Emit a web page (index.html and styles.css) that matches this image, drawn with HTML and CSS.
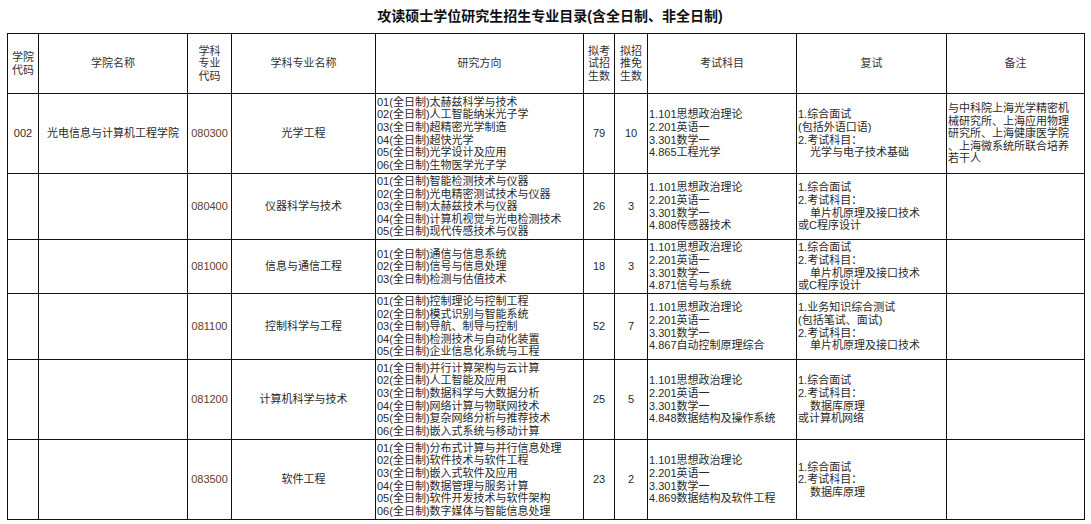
FILE: index.html
```html
<!DOCTYPE html>
<html lang="zh-CN">
<head>
<meta charset="utf-8">
<title>攻读硕士学位研究生招生专业目录</title>
<link rel="stylesheet" href="styles.css">
</head>
<body>
<h1 class="title">攻读硕士学位研究生招生专业目录(含全日制、非全日制)</h1>
<table class="catalog">
  <colgroup>
    <col class="c1"><col class="c2"><col class="c3"><col class="c4"><col class="c5">
    <col class="c6"><col class="c7"><col class="c8"><col class="c9"><col class="c10">
  </colgroup>
  <thead>
    <tr class="h-head">
      <th>学院<br>代码</th>
      <th>学院名称</th>
      <th>学科<br>专业<br>代码</th>
      <th>学科专业名称</th>
      <th>研究方向</th>
      <th>拟考<br>试招<br>生数</th>
      <th>拟招<br>推免<br>生数</th>
      <th>考试科目</th>
      <th>复试</th>
      <th>备注</th>
    </tr>
  </thead>
  <tbody>
    <tr class="h80">
      <td class="center">002</td>
      <td class="center">光电信息与计算机工程学院</td>
      <td class="center code">080300</td>
      <td class="center">光学工程</td>
      <td class="left">01(全日制)太赫兹科学与技术<br>02(全日制)人工智能纳米光子学<br>03(全日制)超精密光学制造<br>04(全日制)超快光学<br>05(全日制)光学设计及应用<br>06(全日制)生物医学光子学</td>
      <td class="center">79</td>
      <td class="center">10</td>
      <td class="left">1.101思想政治理论<br>2.201英语一<br>3.301数学一<br>4.865工程光学</td>
      <td class="left">1.综合面试<br>(包括外语口语)<br>2.考试科目：<br><span class="ind">光学与电子技术基础</span></td>
      <td class="left note">与中科院上海光学精密机<br>械研究所、上海应用物理<br>研究所、上海健康医学院<br>、上海微系统所联合培养<br>若干人</td>
    </tr>
    <tr class="h66">
      <td></td>
      <td></td>
      <td class="center code">080400</td>
      <td class="center">仪器科学与技术</td>
      <td class="left">01(全日制)智能检测技术与仪器<br>02(全日制)光电精密测试技术与仪器<br>03(全日制)太赫兹技术与仪器<br>04(全日制)计算机视觉与光电检测技术<br>05(全日制)现代传感技术与仪器</td>
      <td class="center">26</td>
      <td class="center">3</td>
      <td class="left">1.101思想政治理论<br>2.201英语一<br>3.301数学一<br>4.808传感器技术</td>
      <td class="left">1.综合面试<br>2.考试科目：<br><span class="ind">单片机原理及接口技术</span><br>或C程序设计</td>
      <td></td>
    </tr>
    <tr class="h54">
      <td></td>
      <td></td>
      <td class="center code">081000</td>
      <td class="center">信息与通信工程</td>
      <td class="left">01(全日制)通信与信息系统<br>02(全日制)信号与信息处理<br>03(全日制)检测与估值技术</td>
      <td class="center">18</td>
      <td class="center">3</td>
      <td class="left">1.101思想政治理论<br>2.201英语一<br>3.301数学一<br>4.871信号与系统</td>
      <td class="left">1.综合面试<br>2.考试科目：<br><span class="ind">单片机原理及接口技术</span><br>或C程序设计</td>
      <td></td>
    </tr>
    <tr class="h66">
      <td></td>
      <td></td>
      <td class="center code">081100</td>
      <td class="center">控制科学与工程</td>
      <td class="left">01(全日制)控制理论与控制工程<br>02(全日制)模式识别与智能系统<br>03(全日制)导航、制导与控制<br>04(全日制)检测技术与自动化装置<br>05(全日制)企业信息化系统与工程</td>
      <td class="center">52</td>
      <td class="center">7</td>
      <td class="left">1.101思想政治理论<br>2.201英语一<br>3.301数学一<br>4.867自动控制原理综合</td>
      <td class="left">1.业务知识综合测试<br>(包括笔试、面试)<br>2.考试科目：<br><span class="ind">单片机原理及接口技术</span></td>
      <td></td>
    </tr>
    <tr class="h80">
      <td></td>
      <td></td>
      <td class="center code">081200</td>
      <td class="center">计算机科学与技术</td>
      <td class="left">01(全日制)并行计算架构与云计算<br>02(全日制)人工智能及应用<br>03(全日制)数据科学与大数据分析<br>04(全日制)网络计算与物联网技术<br>05(全日制)复杂网络分析与推荐技术<br>06(全日制)嵌入式系统与移动计算</td>
      <td class="center">25</td>
      <td class="center">5</td>
      <td class="left">1.101思想政治理论<br>2.201英语一<br>3.301数学一<br>4.848数据结构及操作系统</td>
      <td class="left">1.综合面试<br>2.考试科目：<br><span class="ind">数据库原理</span><br>或计算机网络</td>
      <td></td>
    </tr>
    <tr class="h80">
      <td></td>
      <td></td>
      <td class="center code">083500</td>
      <td class="center">软件工程</td>
      <td class="left">01(全日制)分布式计算与并行信息处理<br>02(全日制)软件技术与软件工程<br>03(全日制)嵌入式软件及应用<br>04(全日制)数据管理与服务计算<br>05(全日制)软件开发技术与软件架构<br>06(全日制)数字媒体与智能信息处理</td>
      <td class="center">23</td>
      <td class="center">2</td>
      <td class="left">1.101思想政治理论<br>2.201英语一<br>3.301数学一<br>4.869数据结构及软件工程</td>
      <td class="left">1.综合面试<br>2.考试科目：<br><span class="ind">数据库原理</span></td>
      <td></td>
    </tr>
  </tbody>
</table>
</body>
</html>
```
FILE: styles.css
```css
html, body {
  margin: 0;
  padding: 0;
  background: #ffffff;
}
body {
  font-family: "Liberation Sans", "Noto Sans CJK SC", sans-serif;
  font-size: 11px;
  color: #2a2a2a;
}
.title {
  margin: 0;
  height: 33px;
  line-height: 33px;
  font-size: 14px;
  font-weight: bold;
  text-align: center;
  color: #111;
  padding-left: 9px;
}
.catalog {
  margin-left: 7px;
  border-collapse: collapse;
  table-layout: fixed;
  width: 1077px;
}
.c1 { width: 31px; }
.c2 { width: 149px; }
.c3 { width: 44px; }
.c4 { width: 144px; }
.c5 { width: 208px; }
.c6 { width: 31px; }
.c7 { width: 33px; }
.c8 { width: 149px; }
.c9 { width: 150px; }
.c10 { width: 138px; }
.catalog th,
.catalog td {
  border: 1px solid #111;
  padding: 0 1px;
  vertical-align: middle;
  line-height: 12.6px;
  font-weight: normal;
  white-space: nowrap;
  overflow: hidden;
}
.catalog th {
  text-align: center;
  color: #333;
}
.h-head { height: 60px; }
.h80 { height: 80px; }
.h66 { height: 66px; }
.h54 { height: 54px; }
.center { text-align: center; }
.left { text-align: left; }
.code { color: #5e4128; }
.note { padding-left: 2px; }
.ind { padding-left: 12px; }
```
